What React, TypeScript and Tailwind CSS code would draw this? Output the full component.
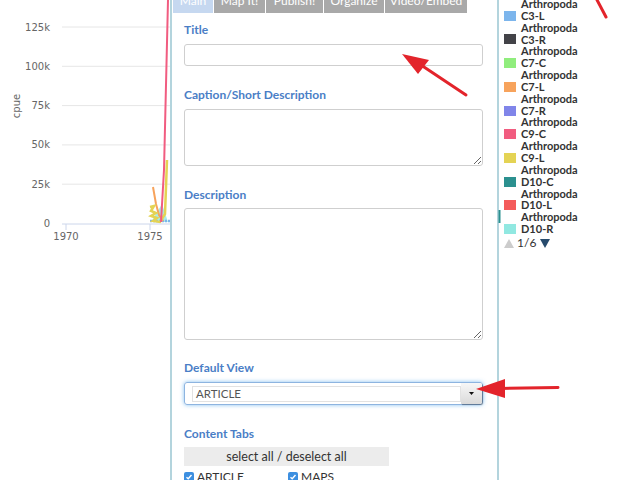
import React from "react";

const legend: [string, string][] = [
  ["C3-L", "#7cb5ec"],
  ["C3-R", "#434348"],
  ["C7-C", "#90ed7d"],
  ["C7-L", "#f7a35c"],
  ["C7-R", "#8085e9"],
  ["C9-C", "#f15c80"],
  ["C9-L", "#e4d354"],
  ["D10-C", "#2b908f"],
  ["D10-L", "#f45b5b"],
  ["D10-R", "#91e8e1"],
];

function Chart() {
  const grid = [27, 66.3, 105.6, 144.9, 184.2];
  const labels = ["125k", "100k", "75k", "50k", "25k"];
  return (
    <svg width="170" height="250" viewBox="0 0 170 250" className="block">
      {grid.map((y, i) => (
        <g key={i}>
          <line x1="62" x2="170" y1={y} y2={y} stroke="#e6e6e6" strokeWidth="1" />
          <text x="50" y={y + 3.5} textAnchor="end" fontSize="10" fill="#666" fontFamily="'DejaVu Sans', sans-serif">
            {labels[i]}
          </text>
        </g>
      ))}
      <text x="50" y="227" textAnchor="end" fontSize="10" fill="#666" fontFamily="'DejaVu Sans', sans-serif">0</text>
      <line x1="62" x2="170" y1="224" y2="224" stroke="#ccd6eb" strokeWidth="1" />
      <line x1="66" x2="66" y1="224" y2="230" stroke="#ccd6eb" strokeWidth="1" />
      <line x1="150" x2="150" y1="224" y2="230" stroke="#ccd6eb" strokeWidth="1" />
      <text x="66" y="240" textAnchor="middle" fontSize="10" fill="#666" fontFamily="'DejaVu Sans', sans-serif">1970</text>
      <text x="150" y="240" textAnchor="middle" fontSize="10" fill="#666" fontFamily="'DejaVu Sans', sans-serif">1975</text>
      <text x="0" y="0" transform="translate(20,106) rotate(-90)" textAnchor="middle" fontSize="10" fill="#666" fontFamily="'DejaVu Sans', sans-serif">cpue</text>
      <polygon points="151,222 162,204 168,222" fill="#91e8e1" opacity="0.8" />
      <path d="M150,221 L170,221" stroke="#7cb5ec" strokeWidth="2.5" strokeDasharray="2 1" />
      <path d="M153,187 L156,204 L159,215 L163,221" stroke="#f7a35c" strokeWidth="2" fill="none" />
      <path d="M150,207 L154,206 L151,211 L156,213 L151,216 L157,218 L153,221 L160,222 L165,214 L167,160" stroke="#e4d354" strokeWidth="2.5" fill="none" />
      <path d="M161,222 L164,170 L168,0" stroke="#f15c80" strokeWidth="2" fill="none" />
    </svg>
  );
}

function Label({ children, className = "" }: { children: React.ReactNode; className?: string }) {
  return <div className={"h-[16px] text-[12px] leading-[16px] font-bold text-[#4a7ec6] " + className}>{children}</div>;
}

function Check() {
  return (
    <span className="w-[10px] h-[10px] rounded-[2px] bg-[#3d8fe0] flex items-center justify-center">
      <svg width="8" height="8" viewBox="0 0 8 8">
        <path d="M1.5 4.2 L3.2 5.8 L6.5 2" stroke="#fff" strokeWidth="1.4" fill="none" />
      </svg>
    </span>
  );
}

export default function App() {
  return (
    <div className="relative w-[640px] h-[480px] overflow-hidden bg-white flex font-['Lato',sans-serif]">
      <div className="w-[170px] shrink-0">
        <Chart />
      </div>

      <div className="w-[329px] shrink-0 h-[480px] border-x-2 border-[#b3d4dd] bg-white">
        <div className="-mt-[10px] h-[23px] flex gap-px pl-px text-[12px] text-white">
          <div className="w-[40px] bg-[#c6d8f0] pt-[4px] text-center leading-[14px]">Main</div>
          <div className="w-[51px] bg-[#a9a9a9] pt-[4px] text-center leading-[14px]">Map It!</div>
          <div className="w-[57px] bg-[#a9a9a9] pt-[4px] text-center leading-[14px]">Publish!</div>
          <div className="w-[60px] bg-[#a9a9a9] pt-[4px] text-center leading-[14px]">Organize</div>
          <div className="w-[82px] bg-[#a9a9a9] pt-[4px] text-center leading-[14px]">Video/Embed</div>
        </div>
        <div className="pl-[12px] pr-[14px]">
          <Label className="mt-[9px]">Title</Label>
          <div className="mt-[6px] h-[22px] border border-[#cfcfcf] rounded-[3px]" />
          <Label className="mt-[21px]">Caption/Short Description</Label>
          <textarea className="mt-[6px] block w-full h-[57px] border border-[#cfcfcf] rounded-[3px] outline-none" />
          <Label className="mt-[21px]">Description</Label>
          <textarea className="mt-[5px] block w-full h-[132px] border border-[#cfcfcf] rounded-[3px] outline-none" />
          <Label className="mt-[20px]">Default View</Label>
          <div className="mt-[6px] h-[23px] border border-[#8db4e0] rounded-[3px] shadow-[0_0_4px_rgba(82,168,236,0.7)] flex">
            <div className="ml-[7px] mt-[3px] h-[16px] w-[271px] border border-[#e2e2e2] bg-white text-[11.5px] leading-[14px] text-[#555] pl-[3px]">ARTICLE</div>
            <div className="ml-auto w-[21px] h-full bg-gradient-to-b from-[#f7f7f7] to-[#dadada] rounded-r-[2px] shadow-[1px_1px_1px_rgba(0,0,0,0.35)] flex items-center justify-center">
              <svg width="5" height="3" viewBox="0 0 5 3"><path d="M0 0 L5 0 L2.5 3 Z" fill="#111" /></svg>
            </div>
          </div>
          <Label className="mt-[21px]">Content Tabs</Label>
          <div className="mt-[5px] w-[205px] h-[19px] bg-[#ececec] text-center text-[12.5px] leading-[19px] text-[#333]">select all / deselect all</div>
          <div className="mt-[4px] flex items-center text-[12px] leading-[14px] text-[#333]">
            <div className="w-[104px] flex items-center gap-[3px]"><Check /><span>ARTICLE</span></div>
            <div className="flex items-center gap-[3px]"><Check /><span>MAPS</span></div>
          </div>
        </div>
      </div>

      <div className="flex-1 pl-[5px] font-bold text-[11px] text-[#333]">
        <div className="-mt-[2px] h-[236px] overflow-hidden leading-[11.85px]">
          {legend.map(([name, color]) => (
            <div key={name}>
              <div className="pl-[17px]">Arthropoda</div>
              <div className="flex items-center">
                <span className="w-[12px] h-[10px] mr-[5px]" style={{ backgroundColor: color }} />
                <span>{name}</span>
              </div>
            </div>
          ))}
        </div>
        <div className="mt-[3px] flex items-center leading-[12px] text-[12px]">
          <svg width="10" height="9" viewBox="0 0 10 9"><path d="M5 0 L10 9 L0 9 Z" fill="#cccccc" /></svg>
          <span className="ml-[3px] font-normal text-[#333]">1/6</span>
          <svg className="ml-[4px]" width="10" height="9" viewBox="0 0 10 9"><path d="M0 0 L10 0 L5 9 Z" fill="#274b6d" /></svg>
        </div>
      </div>

      <svg className="absolute inset-0 pointer-events-none" width="640" height="480" viewBox="0 0 640 480">
        <line x1="499.5" y1="210" x2="499.5" y2="223" stroke="#2b908f" strokeWidth="2" />
        <line x1="466" y1="95" x2="418" y2="63" stroke="#e3242b" strokeWidth="3" strokeLinecap="round" />
        <polygon points="402,54 429,60 418,74" fill="#e3242b" />
        <line x1="558" y1="387.5" x2="500" y2="388.5" stroke="#e3242b" strokeWidth="3" strokeLinecap="round" />
        <polygon points="476,389 505,379 505,398" fill="#e3242b" />
        <line x1="596" y1="-2" x2="606" y2="17" stroke="#e3242b" strokeWidth="3" strokeLinecap="round" />
      </svg>
    </div>
  );
}
